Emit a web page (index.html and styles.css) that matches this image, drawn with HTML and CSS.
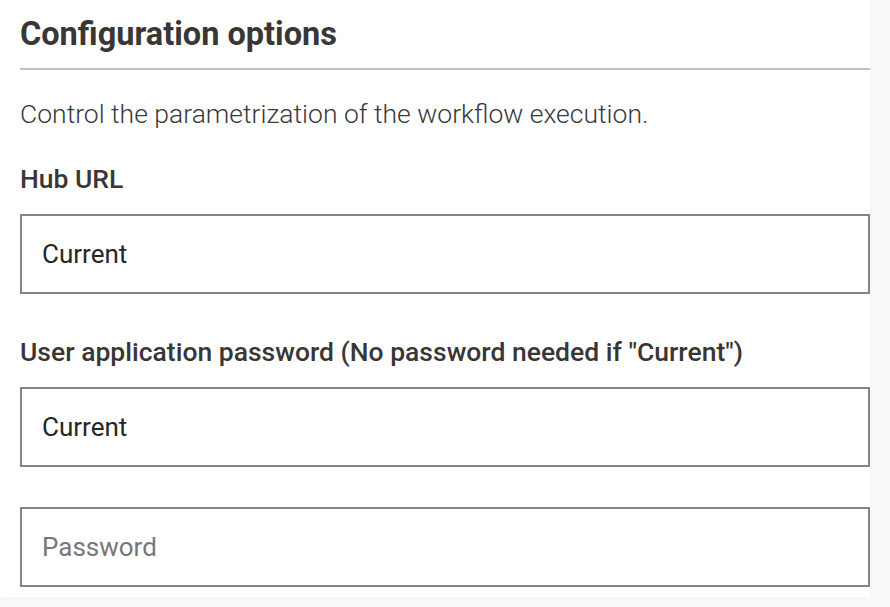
FILE: index.html
```html
<!DOCTYPE html>
<html lang="en">
<head>
<meta charset="utf-8">
<title>Configuration options</title>
<link rel="stylesheet" href="styles.css">
</head>
<body>
<section class="panel">
  <h2 class="panel-title">Configuration options</h2>
  <p class="panel-desc">Control the parametrization of the workflow execution.</p>
  <div class="field">
    <label class="field-label" for="hub">Hub URL</label>
    <input class="field-input" id="hub" type="text" value="Current">
  </div>
  <div class="field">
    <label class="field-label" for="user">User application password (No password needed if "Current")</label>
    <input class="field-input" id="user" type="text" value="Current">
    <input class="field-input field-input--spaced" type="password" placeholder="Password">
  </div>
</section>
</body>
</html>
```

FILE: styles.css
```css
html, body {
  margin: 0;
  padding: 0;
}
body {
  background: #fafafa;
  font-family: Roboto, "Liberation Sans", sans-serif;
  width: 890px;
  height: 607px;
  overflow: hidden;
}
.panel {
  width: 850px;
  background: #ffffff;
  padding: 15px 0 10px 20px;
  box-shadow: 1px 1px 6px rgba(0, 0, 0, 0.03);
}
.panel-title {
  margin: 0;
  font-size: 32.5px;
  line-height: 38px;
  font-weight: 700;
  color: #3a3636;
  padding-bottom: 15px;
  border-bottom: 2px solid #bfc0c2;
}
.panel-desc {
  margin: 28px 0 0;
  font-size: 26.5px;
  line-height: 31px;
  font-weight: 300;
  color: #3a3a3a;
}
.field {
  display: flex;
  flex-direction: column;
  margin-top: 34px;
}
.field + .field {
  margin-top: 42px;
}
.field-label {
  font-size: 26.5px;
  line-height: 31px;
  font-weight: 500;
  color: #3a3636;
  margin-bottom: 20px;
}
.field-input {
  box-sizing: border-box;
  width: 850px;
  height: 80px;
  margin: 0;
  border: 2px solid #858585;
  border-radius: 0;
  padding: 0 20px;
  font-family: Roboto, "Liberation Sans", sans-serif;
  font-size: 26px;
  line-height: 30px;
  font-weight: 400;
  color: #262626;
  background: #ffffff;
  outline: none;
}
.field-input::placeholder {
  color: #777777;
  opacity: 1;
}
.field-input--spaced {
  margin-top: 40px;
}
```
